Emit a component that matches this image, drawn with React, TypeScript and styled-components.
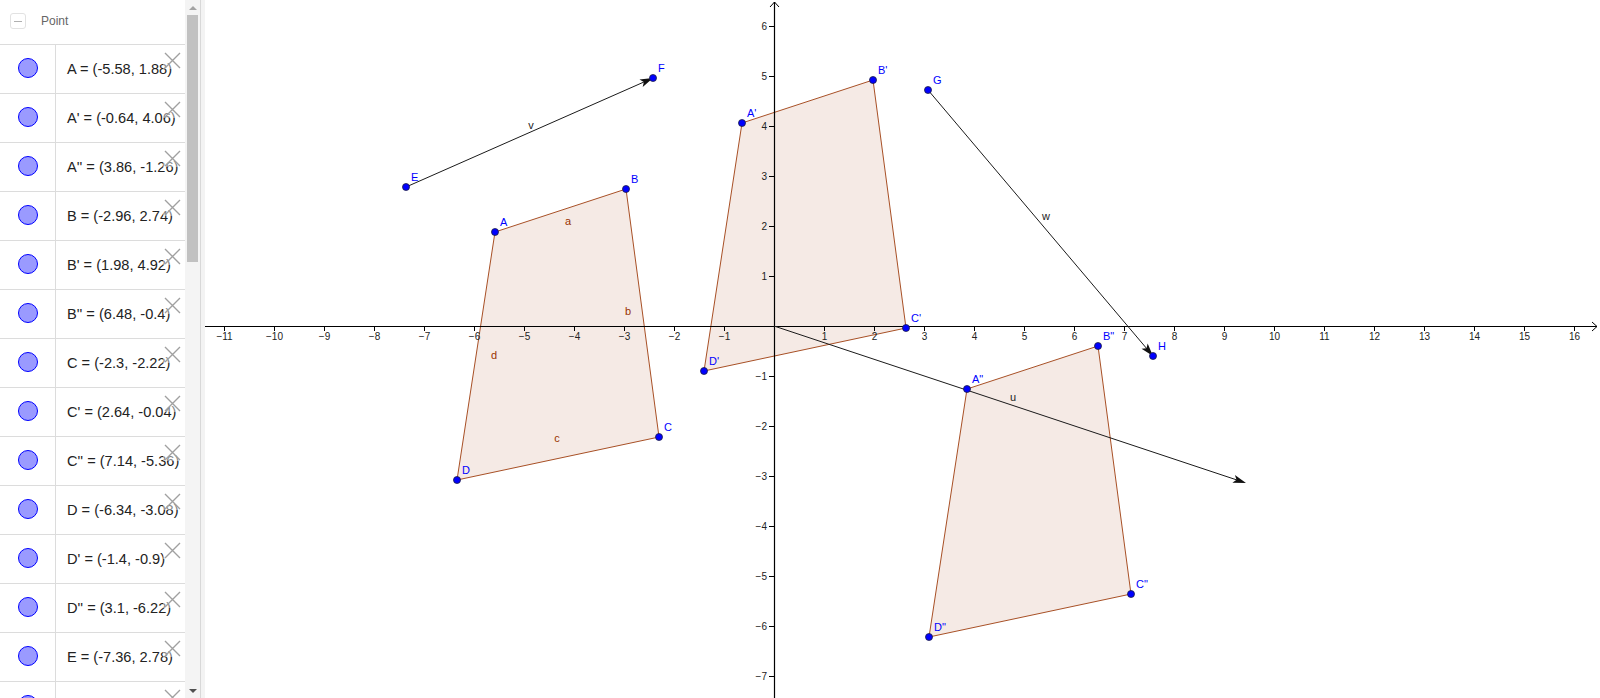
import React from "react";
import styled, { createGlobalStyle } from "styled-components";

const GlobalStyle = createGlobalStyle`
  html, body { margin: 0; padding: 0; width: 100%; height: 100%; overflow: hidden; background: #fff; }
  body { font-family: "Liberation Sans", Arial, sans-serif; }
  #root { width: 100%; height: 100%; }
`;

const Page = styled.div`
  display: flex;
  width: 1600px;
  height: 698px;
  overflow: hidden;
  background: #fff;
`;

const AlgebraPanel = styled.div`
  display: flex;
  width: 200px;
  height: 698px;
  flex-shrink: 0;
`;

const ListArea = styled.div`
  width: 185px;
  height: 698px;
  overflow: hidden;
  display: flex;
  flex-direction: column;
`;

const GroupHeader = styled.div`
  height: 44px;
  flex-shrink: 0;
  display: flex;
  align-items: center;
  padding-left: 10px;
  gap: 15px;
  box-sizing: border-box;
  padding-bottom: 2px;
`;

const ToggleBox = styled.div`
  width: 14px;
  height: 14px;
  border: 1px solid #e2e2e2;
  border-radius: 3px;
  display: flex;
  align-items: center;
  justify-content: center;
  &::after {
    content: "";
    width: 8px;
    height: 1px;
    background: #b0b0b0;
  }
`;

const HeaderLabel = styled.span`
  font-size: 12px;
  color: #666;
`;

const Row = styled.div`
  position: relative;
  height: 49px;
  flex-shrink: 0;
  display: flex;
  border-top: 1px solid #dcdcdc;
  box-sizing: border-box;
`;

const MarkerCell = styled.div`
  width: 56px;
  flex-shrink: 0;
  border-right: 1px solid #dcdcdc;
  display: flex;
  align-items: center;
  justify-content: center;
  padding-bottom: 3px;
  box-sizing: border-box;
`;

const PointDot = styled.div<{ $fill: string; $stroke: string }>`
  width: 18px;
  height: 18px;
  border-radius: 50%;
  background: ${(p) => p.$fill};
  border: 1px solid ${(p) => p.$stroke};
`;

const ValueCell = styled.div`
  flex: 1;
  display: flex;
  align-items: center;
  padding-left: 11px;
  font-size: 14.6px;
  color: #222;
  white-space: nowrap;
  overflow: hidden;
`;

const DeleteButton = styled.div`
  position: absolute;
  top: 6px;
  right: 4px;
  width: 18px;
  height: 18px;
  background: rgba(255, 255, 255, 0.45);
  display: flex;
  align-items: center;
  justify-content: center;
`;

const Scrollbar = styled.div`
  width: 15px;
  height: 698px;
  background: #f4f4f4;
  display: flex;
  flex-direction: column;
  align-items: center;
`;

const ScrollArrow = styled.div<{ $down?: boolean }>`
  height: 15px;
  width: 15px;
  display: flex;
  align-items: center;
  justify-content: center;
  &::after {
    content: "";
    border-left: 4px solid transparent;
    border-right: 4px solid transparent;
    ${(p) =>
      p.$down ? "border-top: 4px solid #505050;" : "border-bottom: 4px solid #a3a3a3;"}
  }
`;

const ScrollTrack = styled.div`
  flex: 1;
  width: 100%;
  display: flex;
  justify-content: center;
`;

const ScrollThumb = styled.div`
  width: 11px;
  height: 247px;
  background: #c1c1c1;
`;

const Divider = styled.div`
  width: 5px;
  height: 698px;
  flex-shrink: 0;
  border-left: 1px solid #d8d8d8;
  background: #f3f3f3;
  box-sizing: border-box;
`;

const GraphicsView = styled.div`
  flex: 1;
  height: 698px;
  overflow: hidden;
`;

const rows = [
  "A = (-5.58, 1.88)",
  "A' = (-0.64, 4.06)",
  "A'' = (3.86, -1.26)",
  "B = (-2.96, 2.74)",
  "B' = (1.98, 4.92)",
  "B'' = (6.48, -0.4)",
  "C = (-2.3, -2.22)",
  "C' = (2.64, -0.04)",
  "C'' = (7.14, -5.36)",
  "D = (-6.34, -3.08)",
  "D' = (-1.4, -0.9)",
  "D'' = (3.1, -6.22)",
  "E = (-7.36, 2.78)",
  "",
];

const DeleteIcon = () => (
  <svg width="17" height="17" viewBox="0 0 17 17">
    <path d="M1 1 L16 16 M16 1 L1 16" stroke="#a0a0a0" strokeWidth="1.4" fill="none" />
  </svg>
);

const OX = 774;
const OY = 326;
const U = 50;
const sx = (x: number) => OX + U * x;
const sy = (y: number) => OY - U * y;

type P = [number, number];
const pts: Record<string, P> = {
  A: [-5.58, 1.88],
  B: [-2.96, 2.74],
  C: [-2.3, -2.22],
  D: [-6.34, -3.08],
  "A'": [-0.64, 4.06],
  "B'": [1.98, 4.92],
  "C'": [2.64, -0.04],
  "D'": [-1.4, -0.9],
  'A"': [3.86, -1.26],
  'B"': [6.48, -0.4],
  'C"': [7.14, -5.36],
  'D"': [3.1, -6.22],
  E: [-7.36, 2.78],
  F: [-2.42, 4.96],
  G: [3.08, 4.72],
  H: [7.58, -0.6],
};

const polys = [
  ["A", "B", "C", "D"],
  ["A'", "B'", "C'", "D'"],
  ['A"', 'B"', 'C"', 'D"'],
];

const vectors: { from: P; to: P; label: string; lx: number; ly: number }[] = [
  { from: pts.E, to: pts.F, label: "v", lx: 531, ly: 129 },
  { from: pts.G, to: pts.H, label: "w", lx: 1046, ly: 220 },
  { from: [0, 0], to: [9.44, -3.14], label: "u", lx: 1013, ly: 401 },
];

const segLabels = [
  { t: "a", x: 568, y: 225 },
  { t: "b", x: 628, y: 315 },
  { t: "c", x: 557, y: 442 },
  { t: "d", x: 494, y: 359 },
];

const minus = (n: number) => (n < 0 ? "\u2212" + Math.abs(n) : String(n));

const FONT = '"Liberation Sans", Arial, sans-serif';

const Arrow = ({ from, to }: { from: P; to: P }) => {
  const x1 = sx(from[0]);
  const y1 = sy(from[1]);
  const x2 = sx(to[0]);
  const y2 = sy(to[1]);
  const dx = x2 - x1;
  const dy = y2 - y1;
  const len = Math.hypot(dx, dy);
  const ux = dx / len;
  const uy = dy / len;
  const hl = 13;
  const hw = 4;
  const bx = x2 - ux * hl;
  const by = y2 - uy * hl;
  const head = `${x2},${y2} ${bx - uy * hw},${by + ux * hw} ${bx + ux * 3},${by + uy * 3} ${bx + uy * hw},${by - ux * hw}`;
  return (
    <g>
      <line x1={x1} y1={y1} x2={bx + ux * 4} y2={by + uy * 4} stroke="#1a1a1a" strokeWidth={1} />
      <polygon points={head} fill="#111" />
    </g>
  );
};

const Graph = () => {
  const xt: number[] = [];
  for (let i = -11; i <= 16; i++) if (i !== 0) xt.push(i);
  const yt: number[] = [];
  for (let j = -7; j <= 6; j++) if (j !== 0) yt.push(j);
  return (
    <svg width="1395" height="698" viewBox="205 0 1395 698" style={{ display: "block" }}>
      {polys.map((p, i) => (
        <polygon
          key={i}
          points={p.map((k) => `${sx(pts[k][0])},${sy(pts[k][1])}`).join(" ")}
          fill="rgba(153,51,0,0.1)"
          stroke="#993300"
          strokeWidth={1}
          strokeOpacity={0.85}
        />
      ))}
      <line x1={205} y1={OY + 0.5} x2={1597} y2={OY + 0.5} stroke="#000" strokeWidth={1.2} />
      <path d={`M1592 ${OY - 4} L1597 ${OY + 0.5} L1592 ${OY + 5}`} stroke="#000" fill="none" strokeWidth={1} />
      <line x1={OX + 0.5} y1={2} x2={OX + 0.5} y2={698} stroke="#000" strokeWidth={1.2} />
      <path d={`M${OX - 4} 7 L${OX + 0.5} 2 L${OX + 5} 7`} stroke="#000" fill="none" strokeWidth={1} />
      {xt.map((i) => (
        <g key={"x" + i}>
          <line x1={sx(i) + 0.5} y1={OY} x2={sx(i) + 0.5} y2={OY + 5} stroke="#000" strokeWidth={1} />
          <text x={sx(i) + 0.5} y={OY + 14} fontSize={10} fontFamily={FONT} fill="#222" textAnchor="middle">
            {minus(i)}
          </text>
        </g>
      ))}
      {yt.map((j) => (
        <g key={"y" + j}>
          <line x1={OX - 5} y1={sy(j) + 0.5} x2={OX} y2={sy(j) + 0.5} stroke="#000" strokeWidth={1} />
          <text x={OX - 7} y={sy(j) + 4} fontSize={10} fontFamily={FONT} fill="#222" textAnchor="end">
            {minus(j)}
          </text>
        </g>
      ))}
      {vectors.map((v, i) => (
        <g key={"v" + i}>
          <Arrow from={v.from} to={v.to} />
          <text x={v.lx} y={v.ly} fontSize={11} fill="#222" textAnchor="middle" fontFamily={FONT}>
            {v.label}
          </text>
        </g>
      ))}
      {segLabels.map((s) => (
        <text key={s.t} x={s.x} y={s.y} fontSize={11} fill="#993300" textAnchor="middle" fontFamily={FONT}>
          {s.t}
        </text>
      ))}
      {Object.entries(pts).map(([k, p]) => (
        <g key={k}>
          <circle cx={sx(p[0])} cy={sy(p[1])} r={3.5} fill="#0000ff" stroke="#202040" strokeWidth={0.8} />
          <text x={sx(p[0]) + 5} y={sy(p[1]) - 6} fontSize={11} fill="#0000ff" fontFamily={FONT}>
            {k}
          </text>
        </g>
      ))}
    </svg>
  );
};

export default function App() {
  return (
    <>
      <GlobalStyle />
      <Page>
        <AlgebraPanel>
          <ListArea>
            <GroupHeader>
              <ToggleBox />
              <HeaderLabel>Point</HeaderLabel>
            </GroupHeader>
            {rows.map((r, i) => (
              <Row key={i}>
                <MarkerCell>
                  <PointDot $fill="#9a9aff" $stroke="#0000ff" />
                </MarkerCell>
                <ValueCell>{r}</ValueCell>
                <DeleteButton>
                  <DeleteIcon />
                </DeleteButton>
              </Row>
            ))}
          </ListArea>
          <Scrollbar>
            <ScrollArrow />
            <ScrollTrack>
              <ScrollThumb />
            </ScrollTrack>
            <ScrollArrow $down />
          </Scrollbar>
        </AlgebraPanel>
        <Divider />
        <GraphicsView>
          <Graph />
        </GraphicsView>
      </Page>
    </>
  );
}
